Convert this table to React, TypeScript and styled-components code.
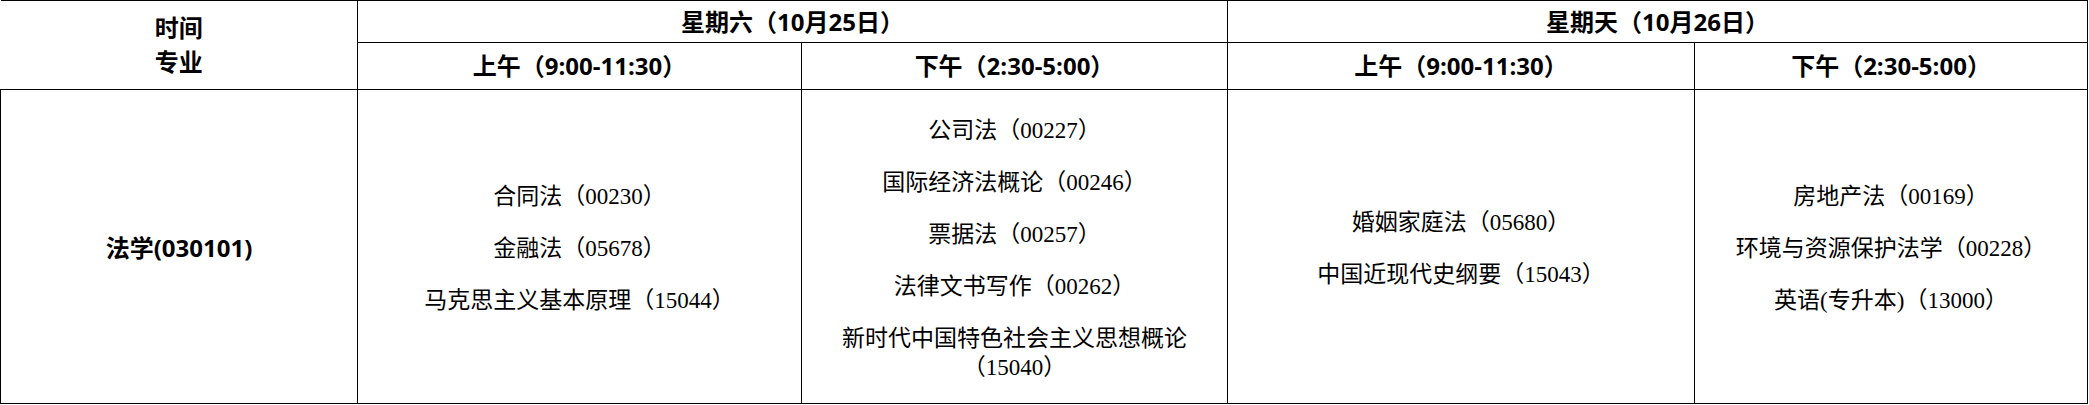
import React from "react";
import styled, { createGlobalStyle } from "styled-components";

const Global = createGlobalStyle`
  html, body { margin: 0; padding: 0; background: #fff; }
  body { font-family: "Liberation Serif", "Noto Sans CJK SC", serif; color: #000; }
`;

const Table = styled.table`
  border-collapse: collapse;
  table-layout: fixed;
  width: 2087px;
`;

const HeadCell = styled.th<{ $noLeft?: boolean; $h: number }>`
  border: 1px solid #000;
  ${(p) => (p.$noLeft ? "border-left: none;" : "")}
  height: ${(p) => p.$h}px;
  padding: 0;
  font-family: "Open Sans", "Noto Sans CJK SC", sans-serif;
  font-weight: 700;
  font-size: 24px;
  line-height: 34px;
  text-align: center;
  vertical-align: middle;
`;

const MajorCell = styled.td`
  border: 1px solid #000;
  height: 313px;
  padding: 0;
  font-family: "Open Sans", "Noto Sans CJK SC", sans-serif;
  font-weight: 700;
  font-size: 24px;
  text-align: center;
  vertical-align: middle;
`;

const CourseCell = styled.td`
  border: 1px solid #000;
  padding: 0 8px;
  text-align: center;
  vertical-align: middle;
`;

const CourseList = styled.div`
  display: flex;
  flex-direction: column;
  align-items: center;
  gap: 23px;
  font-size: 23px;
  line-height: 29px;
  padding-top: 4px;
`;

const Course = styled.div`
  text-align: center;
`;

const sessions: string[][] = [
  ["合同法（00230）", "金融法（05678）", "马克思主义基本原理（15044）"],
  [
    "公司法（00227）",
    "国际经济法概论（00246）",
    "票据法（00257）",
    "法律文书写作（00262）",
    "新时代中国特色社会主义思想概论（15040）",
  ],
  ["婚姻家庭法（05680）", "中国近现代史纲要（15043）"],
  ["房地产法（00169）", "环境与资源保护法学（00228）", "英语(专升本)（13000）"],
];

const widths = [357, 444, 426, 467, 393];

export default function App() {
  return (
    <>
      <Global />
      <Table>
        <colgroup>
          {widths.map((w, i) => (
            <col key={i} style={{ width: w }} />
          ))}
        </colgroup>
        <thead>
          <tr>
            <HeadCell rowSpan={2} $noLeft $h={41}>
              时间
              <br />
              专业
            </HeadCell>
            <HeadCell colSpan={2} $h={41}>
              星期六（10月25日）
            </HeadCell>
            <HeadCell colSpan={2} $h={41}>
              星期天（10月26日）
            </HeadCell>
          </tr>
          <tr>
            <HeadCell $h={46}>上午（9:00-11:30）</HeadCell>
            <HeadCell $h={46}>下午（2:30-5:00）</HeadCell>
            <HeadCell $h={46}>上午（9:00-11:30）</HeadCell>
            <HeadCell $h={46}>下午（2:30-5:00）</HeadCell>
          </tr>
        </thead>
        <tbody>
          <tr>
            <MajorCell>法学(030101)</MajorCell>
            {sessions.map((list, i) => (
              <CourseCell key={i}>
                <CourseList>
                  {list.map((c, j) =>
                    c.startsWith("新时代") ? (
                      <Course key={j}>
                        新时代中国特色社会主义思想概论
                        <br />
                        （15040）
                      </Course>
                    ) : (
                      <Course key={j}>{c}</Course>
                    )
                  )}
                </CourseList>
              </CourseCell>
            ))}
          </tr>
        </tbody>
      </Table>
    </>
  );
}
